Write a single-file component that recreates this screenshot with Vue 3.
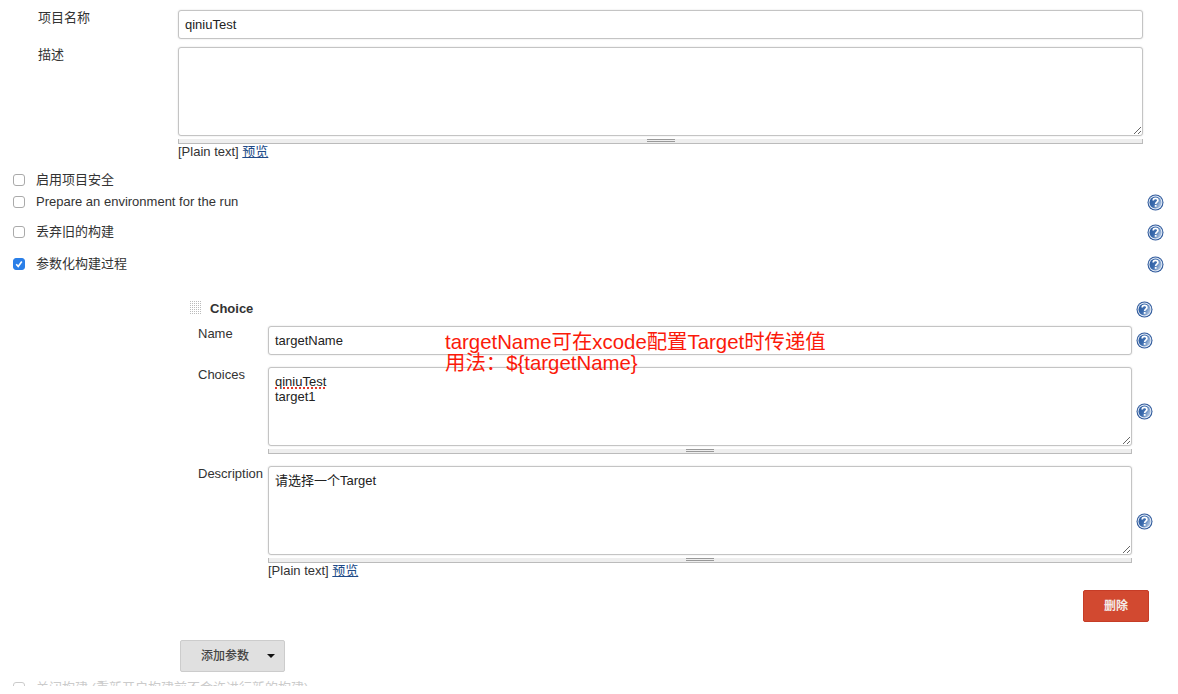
<script setup>
const topChecks = [
  { label: '启用项目安全', gap: '', help: false, checked: false },
  { label: 'Prepare an environment for the run', gap: '', help: true, checked: false },
  { label: '丢弃旧的构建', gap: 'g8', help: true, checked: false },
  { label: '参数化构建过程', gap: 'g10', help: true, checked: true }
]
</script>

<template>
  <div class="page">
    <svg class="defs" width="0" height="0">
      <defs>
        <linearGradient id="hg" x1="0" y1="0" x2="1" y2="0.5">
          <stop offset="0" stop-color="#2a5a9e"/><stop offset="0.55" stop-color="#3c6cae"/><stop offset="1" stop-color="#a9c0de"/>
        </linearGradient>
        <symbol id="help" viewBox="0 0 17 17">
          <circle cx="8.5" cy="8.5" r="8" fill="#2f5a9c"/>
          <circle cx="8.5" cy="8.5" r="6.9" fill="#e8eef7"/>
          <circle cx="8.5" cy="8.5" r="6" fill="url(#hg)"/>
          <path d="M6.2 6.6c0-1.4 1-2.2 2.3-2.2s2.4.8 2.4 2.1c0 1.6-2.2 1.8-2.2 3.4" fill="none" stroke="#fff" stroke-width="1.7"/>
          <rect x="7.8" y="11" width="1.8" height="1.8" fill="#fff"/>
        </symbol>
      </defs>
    </svg>

    <div class="project">
      <div class="row">
        <div class="lbl">项目名称</div>
        <div class="field input">qiniuTest</div>
      </div>
      <div class="row desc-row">
        <div class="lbl">描述</div>
        <div class="col">
          <div class="field area tall"></div>
          <div class="grip"><span></span></div>
          <div class="preview">[Plain text] <a>预览</a></div>
        </div>
      </div>
    </div>

    <div class="checks">
      <div v-for="c in topChecks" :key="c.label" class="check" :class="c.gap">
        <span class="box" :class="{ on: c.checked }">
          <svg v-if="c.checked" width="12" height="12" viewBox="0 0 12 12"><path d="M3.2 6.3 5.2 8.4 8.8 3.6" fill="none" stroke="#fff" stroke-width="1.6"/></svg>
        </span>
        <span class="check-label">{{ c.label }}</span>
        <svg v-if="c.help" class="help" width="17" height="17"><use href="#help"/></svg>
      </div>
    </div>

    <div class="block">
      <div class="block-head">
        <svg class="dots" width="12" height="14" viewBox="0 0 12 14">
          <pattern id="dp" width="2" height="2" patternUnits="userSpaceOnUse"><rect width="1" height="1" fill="#bbb"/></pattern>
          <rect width="12" height="14" fill="url(#dp)"/>
        </svg>
        <b>Choice</b>
        <svg class="help" width="17" height="17"><use href="#help"/></svg>
      </div>

      <div class="param name">
        <div class="plbl">Name</div>
        <div class="field input">targetName</div>
        <svg class="help" width="17" height="17"><use href="#help"/></svg>
      </div>

      <div class="param choices">
        <div class="plbl">Choices</div>
        <div class="col">
          <div class="field area mid"><span class="typo">qiniuTest</span><br>target1</div>
          <div class="grip"><span></span></div>
        </div>
        <svg class="help" width="17" height="17"><use href="#help"/></svg>
      </div>

      <div class="param descr">
        <div class="plbl">Description</div>
        <div class="col">
          <div class="field area tall">请选择一个Target</div>
          <div class="grip"><span></span></div>
          <div class="preview">[Plain text] <a>预览</a></div>
        </div>
        <svg class="help" width="17" height="17"><use href="#help"/></svg>
      </div>

      <div class="del-row"><button class="del">删除</button></div>
    </div>

    <div class="add-row">
      <button class="add">添加参数<i class="caret"></i></button>
    </div>

    <div class="check faded">
      <span class="box"></span>
      <span class="check-label">关闭构建 (重新开启构建前不会许进行新的构建)</span>
    </div>

    <div class="note">targetName可在xcode配置Target时传递值<br>用法：${targetName}</div>
    <div class="fade"></div>
  </div>
</template>

<style>
html, body { margin: 0; background: #fff; overflow: hidden; }
</style>

<style scoped>
.page {
  position: relative;
  width: 1178px;
  height: 694px;
  overflow: hidden;
  background: #fff;
  color: #333;
  font: 13px/15px "Liberation Sans", "Noto Sans CJK SC", sans-serif;
}
.defs { position: absolute; }
.project { padding: 10px 35px 0 38px; }
.row { display: flex; }
.lbl { width: 140px; flex: none; }
.desc-row { margin-top: 8px; }
.col { flex: 1; min-width: 0; }
.field {
  box-sizing: border-box;
  border: 1px solid #c4c4c4;
  border-radius: 3px;
  box-shadow: 0 0 2px #ddd;
  color: #222;
  background: #fff;
  padding: 0 6px;
}
.input { flex: 1; height: 29px; line-height: 27px; }
.area { overflow: auto; resize: vertical; padding-top: 6px; }
.tall { height: 89px; }
.mid { height: 79px; }
.grip {
  box-sizing: border-box;
  height: 5px;
  margin-top: 3px;
  background: #eee;
  border: 1px solid #bbb;
  border-width: 0 1px 1px 1px;
  display: flex;
  justify-content: center;
}
.grip span {
  width: 28px;
  height: 3px;
  border-top: 1px solid #999;
  border-bottom: 1px solid #999;
  box-sizing: border-box;
}
.preview { height: 15px; }
a { color: #204a87; text-decoration: underline; }

.checks { margin-top: 9px; padding-left: 13px; }
.check { display: flex; align-items: center; height: 22px; padding-right: 14px; }
.g8 { margin-top: 8px; }
.g10 { margin-top: 10px; }
.box {
  box-sizing: border-box;
  flex: none;
  width: 12px;
  height: 12px;
  margin-top: 2px;
  border: 1px solid #aaa;
  border-radius: 3px;
  background: #fff;
  display: block;
}
.box.on { background: #2a7fe8; border-color: #2a7fe8; }
.box svg { display: block; margin: -1px; }
.check-label { margin-left: 11px; flex: 1; }
.help { flex: none; display: block; }
.check .help { margin-top: 2px; }

.block { margin-top: 23px; padding-left: 190px; padding-right: 25px; }
.block-head { display: flex; align-items: center; height: 22px; }
.block-head b { margin-left: 8px; flex: 1; color: #333; }
.block-head .help { margin-top: 3px; }
.dots { display: block; }
.param { display: flex; padding-left: 8px; gap: 4px; }
.name { margin-top: 7px; align-items: center; }
.plbl { width: 66px; flex: none; align-self: flex-start; }
.choices { margin-top: 12px; }
.choices .help { margin-top: 36px; }
.descr { margin-top: 12px; }
.descr .help { margin-top: 47px; }
.del-row { display: flex; justify-content: flex-end; margin-top: 12px; padding-right: 4px; }
.del {
  box-sizing: border-box;
  width: 66px;
  height: 32px;
  background: #d24930;
  border: 1px solid #c63c26;
  border-radius: 2px;
  color: #f4ece8;
  font: bold 12px/30px "Liberation Sans", "Noto Sans CJK SC", sans-serif;
  padding: 0;
}
.add-row { margin-top: 18px; padding-left: 180px; }
.add {
  box-sizing: border-box;
  width: 105px;
  height: 32px;
  display: flex;
  align-items: center;
  padding: 0 0 0 20px;
  background: #e0e0e0;
  border: 1px solid #ccc;
  border-radius: 2px;
  color: #444;
  font: 500 12px/30px "Liberation Sans", "Noto Sans CJK SC", sans-serif;
}
.caret {
  margin-left: 18px;
  width: 0;
  height: 0;
  border: 4px solid transparent;
  border-top: 4px solid #111;
  border-bottom: 0;
}
.faded { margin-top: 4px; padding-left: 13px; color: #aaa; opacity: .6; }
.note {
  position: absolute;
  left: 445px;
  top: 332px;
  color: #fb1a0a;
  font-size: 20.4px;
  line-height: 21px;
}
.typo { text-decoration: underline dotted #e03a2c 2px; text-underline-offset: 1px; }
.fade {
  position: absolute;
  left: 0;
  right: 0;
  top: 686px;
  bottom: 0;
  background: #fff;
}
</style>
